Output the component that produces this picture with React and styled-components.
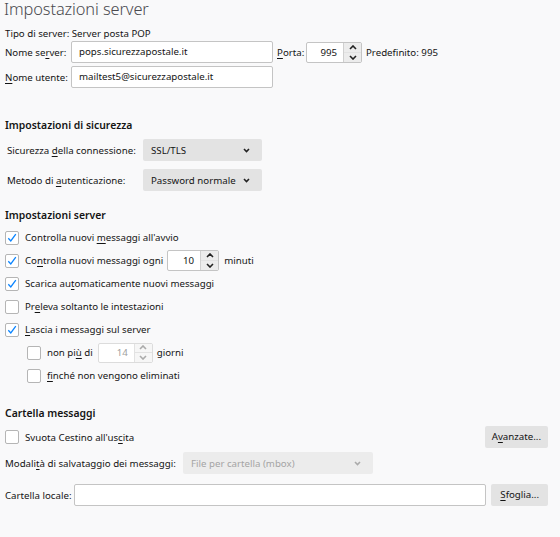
import React from "react";
import styled, { createGlobalStyle } from "styled-components";

const Global = createGlobalStyle`
  html, body { margin: 0; padding: 0; background: #f9f9fa; }
  body { font-family: "Noto Sans", "Open Sans", sans-serif; font-size: 9.7px; color: #141414; }
  * { box-sizing: border-box; }
`;

const Page = styled.div`
  width: 560px;
  height: 537px;
  padding: 0 12px 0 5px;
  display: flex;
  flex-direction: column;
  overflow: hidden;
`;

const Title = styled.div`
  font-size: 16.4px;
  font-weight: 300;
  letter-spacing: -0.1px;
  color: #4a4a4f;
  line-height: 18px;
  height: 16px;
  margin-left: -1px;
  white-space: nowrap;
`;

const Line = styled.div`
  height: 14px;
  line-height: 14px;
  margin-top: ${(p) => p.$mt || 0}px;
  white-space: nowrap;
`;

const Heading = styled.div`
  height: 14px;
  line-height: 14px;
  font-weight: 600;
  font-size: 10.4px;
  margin-top: ${(p) => p.$mt || 0}px;
`;

const Row = styled.div`
  display: flex;
  align-items: center;
  height: ${(p) => p.$h || 22}px;
  margin-top: ${(p) => p.$mt || 0}px;
  padding-left: ${(p) => p.$pl || 0}px;
  white-space: nowrap;
`;

const Label = styled.span`
  width: ${(p) => (p.$w ? p.$w + "px" : "auto")};
  flex-shrink: 0;
  color: ${(p) => (p.$disabled ? "#9a9a9a" : "inherit")};
  margin-left: ${(p) => p.$ml || 0}px;
  margin-right: ${(p) => p.$mr || 0}px;
`;

const U = styled.span`
  text-decoration: underline;
  text-underline-offset: 2px;
`;

const TextInput = styled.div`
  width: ${(p) => p.$w}px;
  height: 22px;
  background: #fff;
  border: 1px solid #c4c4c4;
  border-radius: 2px;
  padding: 0 7px;
  line-height: 20px;
  flex-shrink: 0;
`;

const Spinner = styled.div`
  display: flex;
  height: ${(p) => p.$h || 22}px;
  width: ${(p) => p.$w}px;
  border: 1px solid ${(p) => (p.$disabled ? "#dcdcdc" : "#c4c4c4")};
  border-radius: 2px;
  background: #fff;
  margin: 0 ${(p) => p.$mr || 4}px 0 ${(p) => p.$ml || 0}px;
  flex-shrink: 0;
`;

const SpinValue = styled.div`
  flex: 1;
  text-align: right;
  padding-right: 6px;
  line-height: ${(p) => (p.$h || 22) - 2}px;
  color: ${(p) => (p.$disabled ? "#a0a0a0" : "inherit")};
`;

const SpinArrows = styled.div`
  width: 18px;
  display: flex;
  flex-direction: column;
  border-left: 1px solid ${(p) => (p.$disabled ? "#e2e2e2" : "#d0d0d0")};
  background: ${(p) => (p.$disabled ? "#f6f6f6" : "#ececec")};
`;

const Arrow = styled.div`
  flex: 1;
  display: flex;
  align-items: center;
  justify-content: center;
  & + & { border-top: 1px solid ${(p) => (p.$disabled ? "#e2e2e2" : "#d0d0d0")}; }
`;

const Chevron = ({ up, color = "#222" }) => (
  <svg width="8" height="5" viewBox="0 0 8 5">
    <path
      d={up ? "M1 4 L4 1 L7 4" : "M1 1 L4 4 L7 1"}
      fill="none"
      stroke={color}
      strokeWidth="1.6"
    />
  </svg>
);

const NumberSpin = ({ value, w, h, disabled, ml, mr }) => (
  <Spinner $w={w} $h={h} $disabled={disabled} $ml={ml} $mr={mr}>
    <SpinValue $disabled={disabled} $h={h}>{value}</SpinValue>
    <SpinArrows $disabled={disabled}>
      <Arrow $disabled={disabled}><Chevron up color={disabled ? "#aaa" : "#222"} /></Arrow>
      <Arrow $disabled={disabled}><Chevron color={disabled ? "#aaa" : "#222"} /></Arrow>
    </SpinArrows>
  </Spinner>
);

const Select = styled.div`
  width: ${(p) => p.$w}px;
  height: 22px;
  background: ${(p) => (p.$disabled ? "#ececec" : "#e3e3e3")};
  color: ${(p) => (p.$disabled ? "#a4a4a4" : "inherit")};
  border-radius: 2px;
  display: flex;
  align-items: center;
  justify-content: space-between;
  gap: 6px;
  padding: 0 12px 0 8px;
  flex-shrink: 0;
`;

const SmallChevron = ({ color }) => (
  <svg width="7" height="5" viewBox="0 0 7 5">
    <path d="M1 1 L3.5 3.5 L6 1" fill="none" stroke={color} strokeWidth="1.6" />
  </svg>
);

const Box = styled.span`
  width: 14px;
  height: 14px;
  border: 1px solid #b5b5b5;
  border-radius: 2px;
  background: #fff;
  display: inline-flex;
  align-items: center;
  justify-content: center;
  margin-right: 6px;
  flex-shrink: 0;
`;

const Check = ({ checked }) => (
  <Box>
    {checked && (
      <svg width="10" height="10" viewBox="0 0 10 10">
        <path d="M1.3 5.3 L3.8 8 L8.8 1.2" fill="none" stroke="#0a84ff" strokeWidth="1.3" />
      </svg>
    )}
  </Box>
);

const Button = styled.div`
  height: 22px;
  background: #e3e3e3;
  border-radius: 2px;
  padding: 0 ${(p) => p.$px || 7}px;
  line-height: 22px;
  margin-left: auto;
  flex-shrink: 0;
`;

export default function App() {
  return (
    <>
      <Global />
      <Page>
        <Title>Impostazioni server</Title>
        <Line $mt={11}>Tipo di server: Server posta POP</Line>
        <Row>
          <Label $w={66}>Nome se<U>r</U>ver:</Label>
          <TextInput $w={202}>pops.sicurezzapostale.it</TextInput>
          <Label $ml={4} $mr={0} $w={29}><U>P</U>orta:</Label>
          <NumberSpin value="995" w={56} h={21} ml={0} mr={4} />
          <Label>Predefinito: 995</Label>
        </Row>
        <Row $mt={3}>
          <Label $w={66}><U>N</U>ome utente:</Label>
          <TextInput $w={202}>mailtest5@sicurezzapostale.it</TextInput>
        </Row>

        <Heading $mt={30}>Impostazioni di sicurezza</Heading>
        <Row $mt={7} $pl={2}>
          <Label $w={136}>Sicurezza <U>d</U>ella connessione:</Label>
          <Select $w={119}>SSL/TLS<SmallChevron color="#222" /></Select>
        </Row>
        <Row $mt={8} $pl={2}>
          <Label $w={136}>Metodo di <U>a</U>utenticazione:</Label>
          <Select $w={119}>Password normale<SmallChevron color="#222" /></Select>
        </Row>

        <Heading $mt={17}>Impostazioni server</Heading>
        <Row $h={23} $mt={4}>
          <Check checked />
          <Label>Controlla nuovi <U>m</U>essaggi all'avvio</Label>
        </Row>
        <Row $h={23}>
          <Check checked />
          <Label>Co<U>n</U>trolla nuovi messaggi ogni</Label>
          <NumberSpin value="10" w={52} h={21} ml={4} mr={5} />
          <Label>minuti</Label>
        </Row>
        <Row $h={23}>
          <Check checked />
          <Label>Scarica au<U>t</U>omaticamente nuovi messaggi</Label>
        </Row>
        <Row $h={23}>
          <Check />
          <Label>Pr<U>e</U>leva soltanto le intestazioni</Label>
        </Row>
        <Row $h={23}>
          <Check checked />
          <Label><U>L</U>ascia i messaggi sul server</Label>
        </Row>
        <Row $h={23} $pl={22}>
          <Check />
          <Label>non pi<U>ù</U> di</Label>
          <NumberSpin value="14" w={55} h={20} disabled ml={5} mr={4} />
          <Label>giorni</Label>
        </Row>
        <Row $h={23} $pl={22}>
          <Check />
          <Label><U>f</U>inché non vengono eliminati</Label>
        </Row>

        <Heading $mt={19}>Cartella messaggi</Heading>
        <Row $mt={6}>
          <Check />
          <Label>Svuota Cestino all'us<U>c</U>ita</Label>
          <Button $px={7}>A<U>v</U>anzate...</Button>
        </Row>
        <Row $mt={4}>
          <Label $w={178}>Modali<U>t</U>à di salvataggio dei messaggi:</Label>
          <Select $w={190} $disabled>File per cartella (mbox)<SmallChevron color="#aaa" /></Select>
        </Row>
        <Row $mt={10}>
          <Label $w={69}>Cartella locale:</Label>
          <TextInput $w={412} />
          <Button $px={9}><U>S</U>foglia...</Button>
        </Row>
      </Page>
    </>
  );
}
